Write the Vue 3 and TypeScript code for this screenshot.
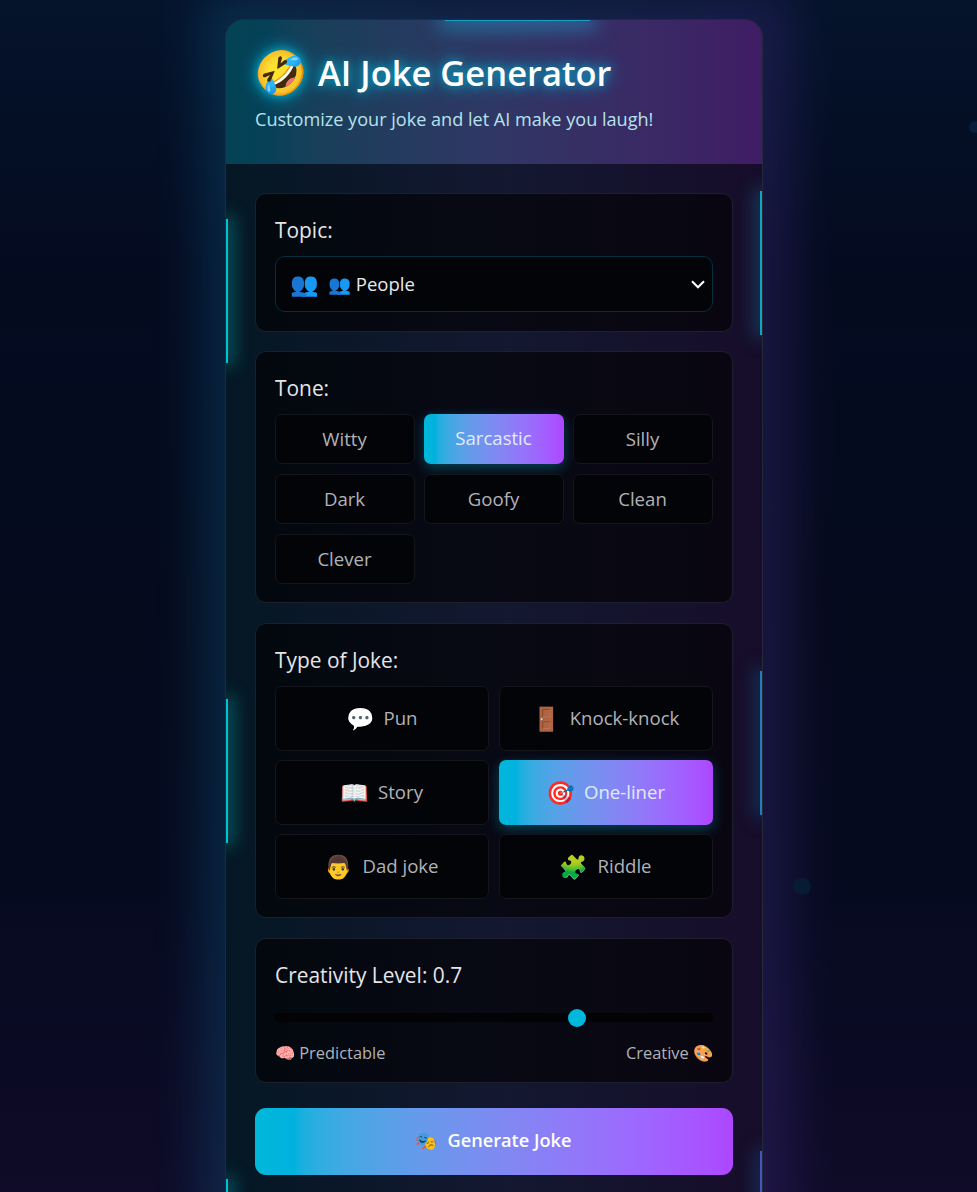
<script setup lang="ts">
import { ref } from 'vue'

interface JokeType {
  icon: string
  label: string
}

const tones: string[] = ['Witty', 'Sarcastic', 'Silly', 'Dark', 'Goofy', 'Clean', 'Clever']
const types: JokeType[] = [
  { icon: '💬', label: 'Pun' },
  { icon: '🚪', label: 'Knock-knock' },
  { icon: '📖', label: 'Story' },
  { icon: '🎯', label: 'One-liner' },
  { icon: '👨', label: 'Dad joke' },
  { icon: '🧩', label: 'Riddle' },
]
const tone = ref('Sarcastic')
const jokeType = ref('One-liner')
const creativity = ref(0.7)
</script>

<template>
  <div class="page">
    <span class="bubble bubble-a"></span>
    <span class="bubble bubble-b"></span>
    <div class="shell">
      <div class="halo"></div>
      <main class="card">
        <header class="head">
          <h1><span class="laugh">🤣</span><span class="title">AI Joke Generator</span></h1>
          <p>Customize your joke and let AI make you laugh!</p>
        </header>
        <div class="form">
          <section class="panel topic">
            <h2>Topic:</h2>
            <div class="select">
              <span class="big">👥</span>
              <span class="value">👥 People</span>
              <svg class="chev" viewBox="0 0 14 9" width="14" height="9"><path d="M1 1.2 L7 7.2 L13 1.2" /></svg>
            </div>
          </section>
          <section class="panel tone">
            <h2>Tone:</h2>
            <div class="grid three">
              <button v-for="t in tones" :key="t" :class="{ on: t === tone }" @click="tone = t"><span>{{ t }}</span></button>
            </div>
          </section>
          <section class="panel kind">
            <h2>Type of Joke:</h2>
            <div class="grid two">
              <button v-for="t in types" :key="t.label" :class="{ on: t.label === jokeType }" @click="jokeType = t.label">
                <span class="ico">{{ t.icon }}</span><span>{{ t.label }}</span>
              </button>
            </div>
          </section>
          <section class="panel level">
            <h2>Creativity Level: {{ creativity }}</h2>
            <div class="track"><i :style="{ left: `calc(8px + (100% - 18px) * ${creativity})` }"></i></div>
            <div class="ends"><span>🧠 Predictable</span><span>Creative 🎨</span></div>
          </section>
          <button class="go"><span class="mask">🎭</span><span>Generate Joke</span></button>
        </div>
        <i class="beam top"></i>
        <i class="beam l1"></i>
        <i class="beam l2"></i>
        <i class="beam l3"></i>
        <i class="beam r1"></i>
        <i class="beam r2"></i>
        <i class="beam r3"></i>
      </main>
    </div>
  </div>
</template>

<style>
body { margin: 0; background: #050a1c; }
</style>

<style scoped>
* { box-sizing: border-box; }
.page {
  position: relative;
  height: 1192px;
  overflow: hidden;
  padding: 19px 0 0 225px;
  background: linear-gradient(180deg, #05132b 0%, #040b20 22%, #050a1d 50%, #060a20 75%, #0f0b28 100%);
  font-family: "Open Sans", "Noto Sans", sans-serif;
  color: #fff;
}
.bubble { position: absolute; border-radius: 50%; background: #06203a; }
.bubble-a { left: 793px; top: 878px; width: 18px; height: 17px; background: #081b35; z-index: 1; }
.bubble-b { left: 969px; top: 121px; width: 12px; height: 12px; }
.shell { position: relative; width: 538px; }
.halo {
  position: absolute;
  inset: -26px -30px -100px -24px;
  border-radius: 20px;
  background: linear-gradient(to right in oklab, #0284b7, #5a38b0);
  opacity: .23;
  filter: blur(24px);
}
.card {
  position: relative;
  height: 1260px;
  border: 1px solid #222a3b;
  border-radius: 18px;
  overflow: hidden;
  background: linear-gradient(90deg, #051724, #131830 50%, #170d2a);
}
.head {
  height: 144px;
  padding: 25px 29px 0;
  background: linear-gradient(to right in oklab, oklch(71.5% .143 215.221 / .27), oklch(62.7% .265 303.9 / .27));
}
h1 {
  display: flex;
  align-items: center;
  height: 54px;
  margin: 0;
  font-size: 34.5px;
  font-weight: 600;
  line-height: 54px;
  white-space: nowrap;
  text-shadow: 0 0 9px #00b8db99, 0 0 18px #00b8db;
}
.laugh { width: 63px; font-size: 43px; margin-left: -1px; padding-right: 1px; }
.title { padding: 2px 0 0 1px; }
.head p { margin: 7px 0 0; font-size: 18.1px; line-height: 27px; color: #b5e3ee; white-space: nowrap; }
.form { padding: 29px 29px 0; display: flex; flex-direction: column; }
.panel {
  border: 1px solid #1d1f2a;
  border-radius: 11px;
  padding: 23px 19px 0;
  background: linear-gradient(90deg, #03080e, #080914 50%, #090611);
}
.topic { height: 139px; margin-bottom: 19px; }
.tone { height: 252px; margin-bottom: 20px; }
.kind { height: 295px; margin-bottom: 20px; }
.level { height: 145px; margin-bottom: 25px; }
h2 { margin: 0 0 12px; font-size: 20.9px; line-height: 27px; font-weight: 400; color: #e4e5e8; white-space: nowrap; }
.select {
  display: flex;
  align-items: center;
  height: 56px;
  padding: 0 7px 2px 14px;
  border: 1px solid #04303d;
  border-radius: 10px;
  background: #030408;
  font-size: 18.5px;
  color: #e9e9eb;
}
.big { width: 38px; font-size: 23px; }
.value { flex: 1; }
.chev { fill: none; stroke: #fff; stroke-width: 2.1; margin-top: 2px; }
.grid { display: grid; column-gap: 9px; }
.three { grid-template-columns: repeat(3, 1fr); grid-auto-rows: 50px; row-gap: 10px; }
.two { grid-template-columns: repeat(2, 1fr); grid-auto-rows: 65px; row-gap: 9px; column-gap: 10px; }
button {
  display: flex;
  align-items: center;
  justify-content: center;
  padding: 0 1px 2px 0;
  border: 1px solid #15161b;
  border-radius: 7px;
  background: #030408;
  color: #b1b2b6;
  font: 400 18.6px/26px "Open Sans", "Noto Sans", sans-serif;
}
.three button { padding-bottom: 1px; }
button.on {
  border: 0;
  color: #e2ebfd;
  background: linear-gradient(to right in oklab, oklch(71.5% .143 215.221), oklch(62.7% .265 303.9));
  box-shadow: 0 4px 13px #00b8db55;
}
.three button.on { padding-bottom: 2px; }
.ico { width: 38px; font-size: 23px; text-align: left; }
.track { position: relative; height: 9px; margin-top: 24px; border-radius: 5px; background: #030306; }
.track i { position: absolute; top: -4px; width: 18px; height: 18px; margin-left: -9px; border-radius: 50%; background: #00b8db; }
.ends { display: flex; justify-content: space-between; margin-top: 19px; font-size: 16.4px; line-height: 24px; color: #b1b2b8; }
.go {
  height: 67px;
  border: 0;
  border-radius: 11px;
  color: #fff;
  font-size: 18.2px;
  font-weight: 600;
  padding: 0 2px 3px 0;
  background: linear-gradient(to right in oklab, oklch(71.5% .143 215.221), oklch(62.7% .265 303.9));
}
.mask { width: 33px; font-size: 18px; font-weight: 400; text-align: left; }
.beam { position: absolute; width: 2px; height: 144px; background: #00c3cf; box-shadow: 0 0 18px 3px #00d5de99; }
.top { left: 219px; top: 0; width: 145px; height: 1px; background: #159fc3; box-shadow: 0 0 20px 6px #1db5e899; }
.l1 { left: 0; top: 199px; }
.l2 { left: 0; top: 679px; }
.l3 { left: 0; top: 1159px; }
.r1 { right: 0; top: 171px; background: #12a5c3; box-shadow: 0 0 18px 3px #14a6cc88; }
.r2 { right: 0; top: 651px; background: #267bbd; box-shadow: 0 0 18px 3px #1386bb88; }
.r3 { right: 0; top: 1131px; background: #4555bd; box-shadow: 0 0 18px 3px #1e70b588; }
</style>
